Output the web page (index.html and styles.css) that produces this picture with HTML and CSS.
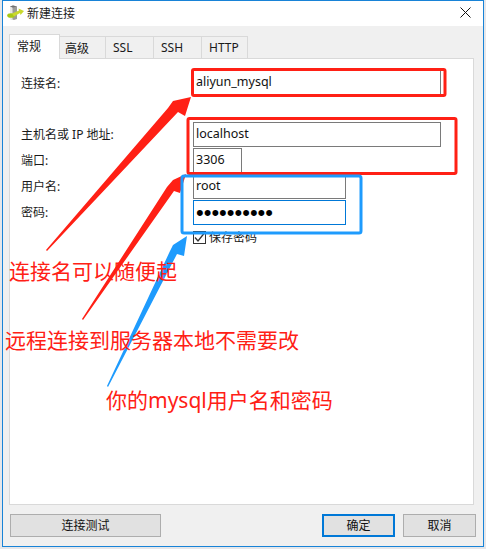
FILE: index.html
```html
<!DOCTYPE html>
<html lang="zh-CN">
<head>
    <meta charset="UTF-8">
    <title>新建连接</title>
    <link rel="stylesheet" href="styles.css">
</head>
<body>
    <div class="window">
        <div class="titlebar">
            <svg class="app-icon" width="20" height="18" viewBox="0 0 20 18">
                <path d="M4 2.500 L7 1.500 L11 2.500 L11 15 L8 16 L4 15 Z" fill="#9c9c98"/>
                <path d="M4 2.500 L6.500 3.500 L6.500 16 L4 15 Z" fill="#e8e8e4"/>
                <path d="M4 2.500 L7 1.500 L11 2.500 L7 3.500 Z" fill="#707070"/>
                <ellipse cx="5" cy="11.500" rx="3.800" ry="2.300" fill="#a8c814"/>
                <path d="M6 9.500 L13 6.500 L12.500 4.500 L18 7 L14.500 11 L14 9 L8 12.500 Z" fill="#c9d92c"/>
            </svg>
            <span class="title">新建连接</span>
            <svg class="close" width="11" height="11" viewBox="0 0 11 11">
                <path d="M.5 .5 L10.500 10.500 M10.500 .5 L.5 10.500" stroke="#111" stroke-width="1"/>
            </svg>
        </div>

        <div class="content">
            <div class="tabs">
                <div class="tab active">常规</div>
                <div class="tab first-tab">高级</div>
                <div class="tab w48">SSL</div>
                <div class="tab w48">SSH</div>
                <div class="tab w46">HTTP</div>
            </div>
            <div class="panel">
                <div class="row first">
                    <label>连接名:</label>
                    <input class="long" type="text" value="aliyun_mysql">
                </div>
                <div class="row second">
                    <label>主机名或 IP 地址:</label>
                    <input class="long" type="text" value="localhost">
                </div>
                <div class="row">
                    <label>端口:</label>
                    <input class="short" type="text" value="3306">
                </div>
                <div class="row">
                    <label>用户名:</label>
                    <input class="medium" type="text" value="root">
                </div>
                <div class="row">
                    <label>密码:</label>
                    <input class="medium focused" type="password" value="1234567890">
                </div>
                <div class="row check-row">
                    <span class="checkbox">
                        <svg width="11" height="11" viewBox="0 0 11 11"><path d="M1 5.500 L4 9 L10 1.500" fill="none" stroke="#333" stroke-width="1.300"/></svg>
                    </span>
                    <span>保存密码</span>
                </div>
            </div>
            <div class="footer">
                <button class="btn test" type="button">连接测试</button>
                <div class="footer-right">
                    <button class="btn default" type="button">确定</button>
                    <button class="btn" type="button">取消</button>
                </div>
            </div>
        </div>
    </div>

    <!-- 标注层 -->
    <svg class="marks" width="486" height="549" viewBox="0 0 486 549">
        <rect x="192.500" y="69.500" width="252.500" height="26" rx="1.500" fill="none" stroke="#ff2015" stroke-width="3"/>
        <rect x="188" y="118.500" width="268" height="55" rx="1.500" fill="none" stroke="#ff2015" stroke-width="3"/>
        <polygon points="46,250 168,108 173,101 191,97 185,116 178,112 47,251" fill="#ff2015"/>
        <polygon points="82,319 167,187 173,180 186,174 180,193 174,191 83,320" fill="#ff2015"/>
        <rect x="182" y="176" width="179" height="57" rx="2" fill="none" stroke="#1e9bfd" stroke-width="3"/>
        <polygon points="107,386 170,251 173,245 187,236 184,256 177,254 108,387" fill="#1e9bfd"/>
    </svg>
    <div class="note note-a">连接名可以随便起</div>
    <div class="note note-b">远程连接到服务器本地不需要改</div>
    <div class="note note-c">你的mysql用户名和密码</div>
</body>
</html>
```

FILE: styles.css
```css
* {
    box-sizing: border-box;
}
body {
    margin: 0;
    width: 486px;
    height: 549px;
    overflow: hidden;
    position: relative;
    background: #e6e7ea;
    font-family: "Noto Sans", "Noto Sans CJK SC", sans-serif;
    font-size: 12px;
    color: #1a1a1a;
}
.window {
    margin-left: 2px;
    width: 482px;
    height: 547px;
    border: 1px solid #1883d7;
    background: #f0f0f0;
    display: flex;
    flex-direction: column;
}
.titlebar {
    height: 25px;
    flex: none;
    background: #fff;
    display: flex;
    align-items: center;
    padding: 0 12px 2px 3px;
}
.app-icon {
    flex: none;
}
.title {
    margin-left: 1px;
    font-size: 12px;
}
.close {
    margin-left: auto;
}
.content {
    flex: 1;
    padding: 8px 8px 9px 6px;
    display: flex;
    flex-direction: column;
}
.tabs {
    display: flex;
    align-items: flex-end;
    height: 24px;
    flex: none;
}
.tab {
    height: 22px;
    background: #f0f0f0;
    border: 1px solid #d9d9d9;
    border-bottom: none;
    border-left: none;
    display: flex;
    align-items: center;
    padding-left: 7px;
}
.tab.active {
    width: 51px;
    height: 25px;
    margin-bottom: -1px;
    background: #fff;
    border-left: 1px solid #d9d9d9;
    position: relative;
    z-index: 1;
    padding-bottom: 3px;
}
.first-tab {
    width: 46px;
    padding-left: 5px;
}
.w46 {
    width: 46px;
}
.w48 {
    width: 48px;
}
.panel {
    flex: 1;
    background: #fff;
    border: 1px solid #d9d9d9;
    padding: 11px 0 0 11px;
    width: 465px;
}
.row {
    display: flex;
    align-items: center;
    height: 25px;
    margin-bottom: 1px;
}
.row label {
    width: 172px;
    flex: none;
}
.second ~ .row label,
.second label {
    padding-bottom: 2px;
}
.first {
    margin-bottom: 27px;
}
.row input {
    height: 25px;
    border: 1px solid #7a7a7a;
    padding: 0 2px 3px;
    font: inherit;
    font-size: 12.500px;
    color: #111;
    outline: none;
    background: #fff;
}
.long {
    width: 248px;
}
.short {
    width: 49px;
}
.medium {
    width: 153px;
}
.row .focused {
    border-color: #0078d7;
    font-family: "Liberation Sans", sans-serif;
    font-size: 22px;
    line-height: 1;
    color: #000;
    padding: 0 2px;
}
.check-row {
    margin-top: 5px;
    margin-left: 172px;
    height: 14px;
}
.checkbox {
    width: 13px;
    height: 13px;
    border: 1px solid #333;
    margin-right: 3px;
    display: flex;
    align-items: center;
    justify-content: center;
}
.footer {
    flex: none;
    margin-top: 9px;
    padding-left: 1px;
    display: flex;
    justify-content: space-between;
    margin-right: -1px;
}
.footer-right {
    display: flex;
    gap: 8px;
}
.btn {
    width: 73px;
    height: 23px;
    background: #e1e1e1;
    border: 1px solid #adadad;
    font: inherit;
    color: #111;
    padding: 0 0 2px;
}
.test {
    width: 151px;
}
.default {
    border: 2px solid #0078d7;
}
.marks {
    position: absolute;
    left: 0;
    top: 0;
}
.note {
    position: absolute;
    font-size: 21px;
    line-height: 28px;
    color: #ff2015;
    white-space: nowrap;
}
.note-a {
    left: 9px;
    top: 257px;
}
.note-b {
    left: 5px;
    top: 326px;
}
.note-c {
    left: 106px;
    top: 386px;
}
```
